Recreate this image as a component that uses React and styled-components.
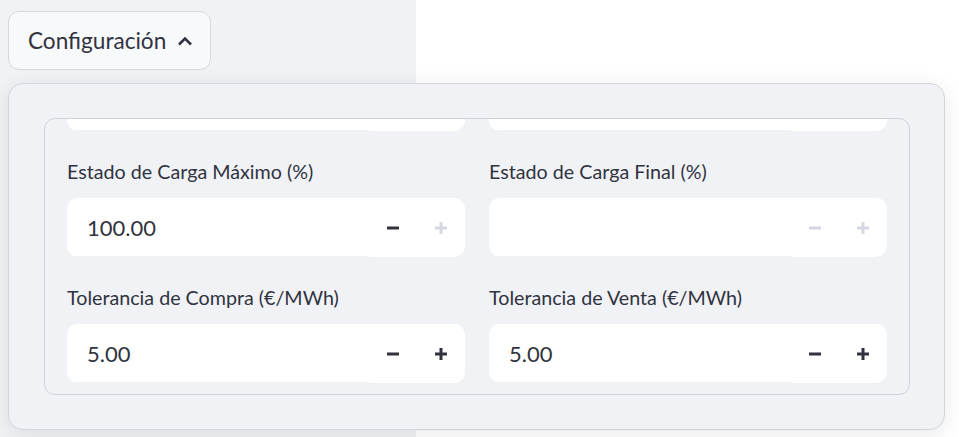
import React, { useEffect, useRef } from "react"
import styled, { createGlobalStyle } from "styled-components"

const GlobalStyle = createGlobalStyle`
  html, body {
    margin: 0;
    padding: 0;
    background: #ffffff;
    font-family: "Lato", "Noto Sans", sans-serif;
    color: #31333f;
  }
`

const Page = styled.div`
  position: relative;
  display: flex;
  width: 959px;
  height: 437px;
  overflow: hidden;
`

const Sidebar = styled.div`
  width: 416px;
  height: 100%;
  background: #f0f2f6;
  padding: 11px 0 0 8px;
  box-sizing: border-box;
`

const Toggle = styled.button`
  display: flex;
  align-items: center;
  gap: 11px;
  height: 59px;
  padding: 0 17px 0 19px;
  border: 1px solid #d6d8de;
  border-radius: 11px;
  background: #f8f9fb;
  color: #31333f;
  font-family: inherit;
  font-size: 22.6px;
  cursor: pointer;
`

const Popover = styled.div`
  position: absolute;
  left: 8px;
  top: 83px;
  width: 937px;
  height: 347px;
  box-sizing: border-box;
  padding: 34px 34px 34px 35px;
  background: #f0f2f6;
  border: 1px solid #d3d5da;
  border-radius: 15px;
  box-shadow: 0 4px 22px rgba(0, 0, 0, 0.09);
`

const Frame = styled.div`
  height: 100%;
  box-sizing: border-box;
  border: 1px solid #d0d2d7;
  border-radius: 11px;
  overflow-y: auto;
  scrollbar-width: none;
  &::-webkit-scrollbar { display: none; }
`

const Grid = styled.div`
  display: grid;
  grid-template-columns: 1fr 1fr;
  column-gap: 24px;
  row-gap: 26px;
  padding: 11px 22px;
`

const Field = styled.div`
  display: flex;
  flex-direction: column;
`

const Label = styled.div`
  height: 30px;
  line-height: 30px;
  margin-bottom: 11px;
  font-size: 19.7px;
  white-space: nowrap;
`

const InputBox = styled.div`
  display: flex;
  height: 59px;
  background: #ffffff;
  border-radius: 11px;
  overflow: hidden;
`

const Value = styled.div`
  flex: 1;
  display: flex;
  align-items: center;
  margin-left: 8px;
  padding-left: 12px;
  font-size: 22px;
  border-bottom: 1px solid #eef0f4;
`

const Step = styled.button`
  width: 48px;
  height: 100%;
  border: none;
  background: transparent;
  display: flex;
  align-items: center;
  justify-content: center;
  padding: 0;
  color: ${p => (p.disabled ? "#d5d8e0" : "#31333f")};
`

const Minus = () => (
  <svg width="14" height="14" viewBox="0 0 14 14">
    <path d="M1 7h12" stroke="currentColor" strokeWidth="3" />
  </svg>
)

const Plus = () => (
  <svg width="14" height="14" viewBox="0 0 14 14">
    <path d="M1 7h12M7 1v12" stroke="currentColor" strokeWidth="3" />
  </svg>
)

const Chevron = () => (
  <svg width="16" height="10" viewBox="0 0 16 10">
    <path d="M2 8.5l6-6 6 6" stroke="#31333f" strokeWidth="2.6" fill="none" />
  </svg>
)

const fields = [
  { label: "Estado de Carga Mínimo (%)", value: "0.00", minus: true, plus: true },
  { label: "Estado de Carga Inicial (%)", value: "", minus: true, plus: true },
  { label: "Estado de Carga Máximo (%)", value: "100.00", minus: true, plus: false },
  { label: "Estado de Carga Final (%)", value: "", minus: false, plus: false },
  { label: "Tolerancia de Compra (€/MWh)", value: "5.00", minus: true, plus: true },
  { label: "Tolerancia de Venta (€/MWh)", value: "5.00", minus: true, plus: true },
]

const NumberInput = ({ label, value, minus, plus }) =>
  <Field>
    <Label>{ label }</Label>
    <InputBox>
      <Value>{ value }</Value>
      <Step disabled={ !minus }><Minus /></Step>
      <Step disabled={ !plus }><Plus /></Step>
    </InputBox>
  </Field>

export default function App() {
  const frame = useRef(null)

  useEffect(() => {
    if (frame.current) frame.current.scrollTop = frame.current.scrollHeight
  }, [])

  return (
    <>
      <GlobalStyle />
      <Page>
        <Sidebar>
          <Toggle>
            Configuración
            <Chevron />
          </Toggle>
        </Sidebar>
        <Popover>
          <Frame ref={ frame }>
            <Grid>
              { fields.map(f => <NumberInput key={ f.label } { ...f } />) }
            </Grid>
          </Frame>
        </Popover>
      </Page>
    </>
  )
}
